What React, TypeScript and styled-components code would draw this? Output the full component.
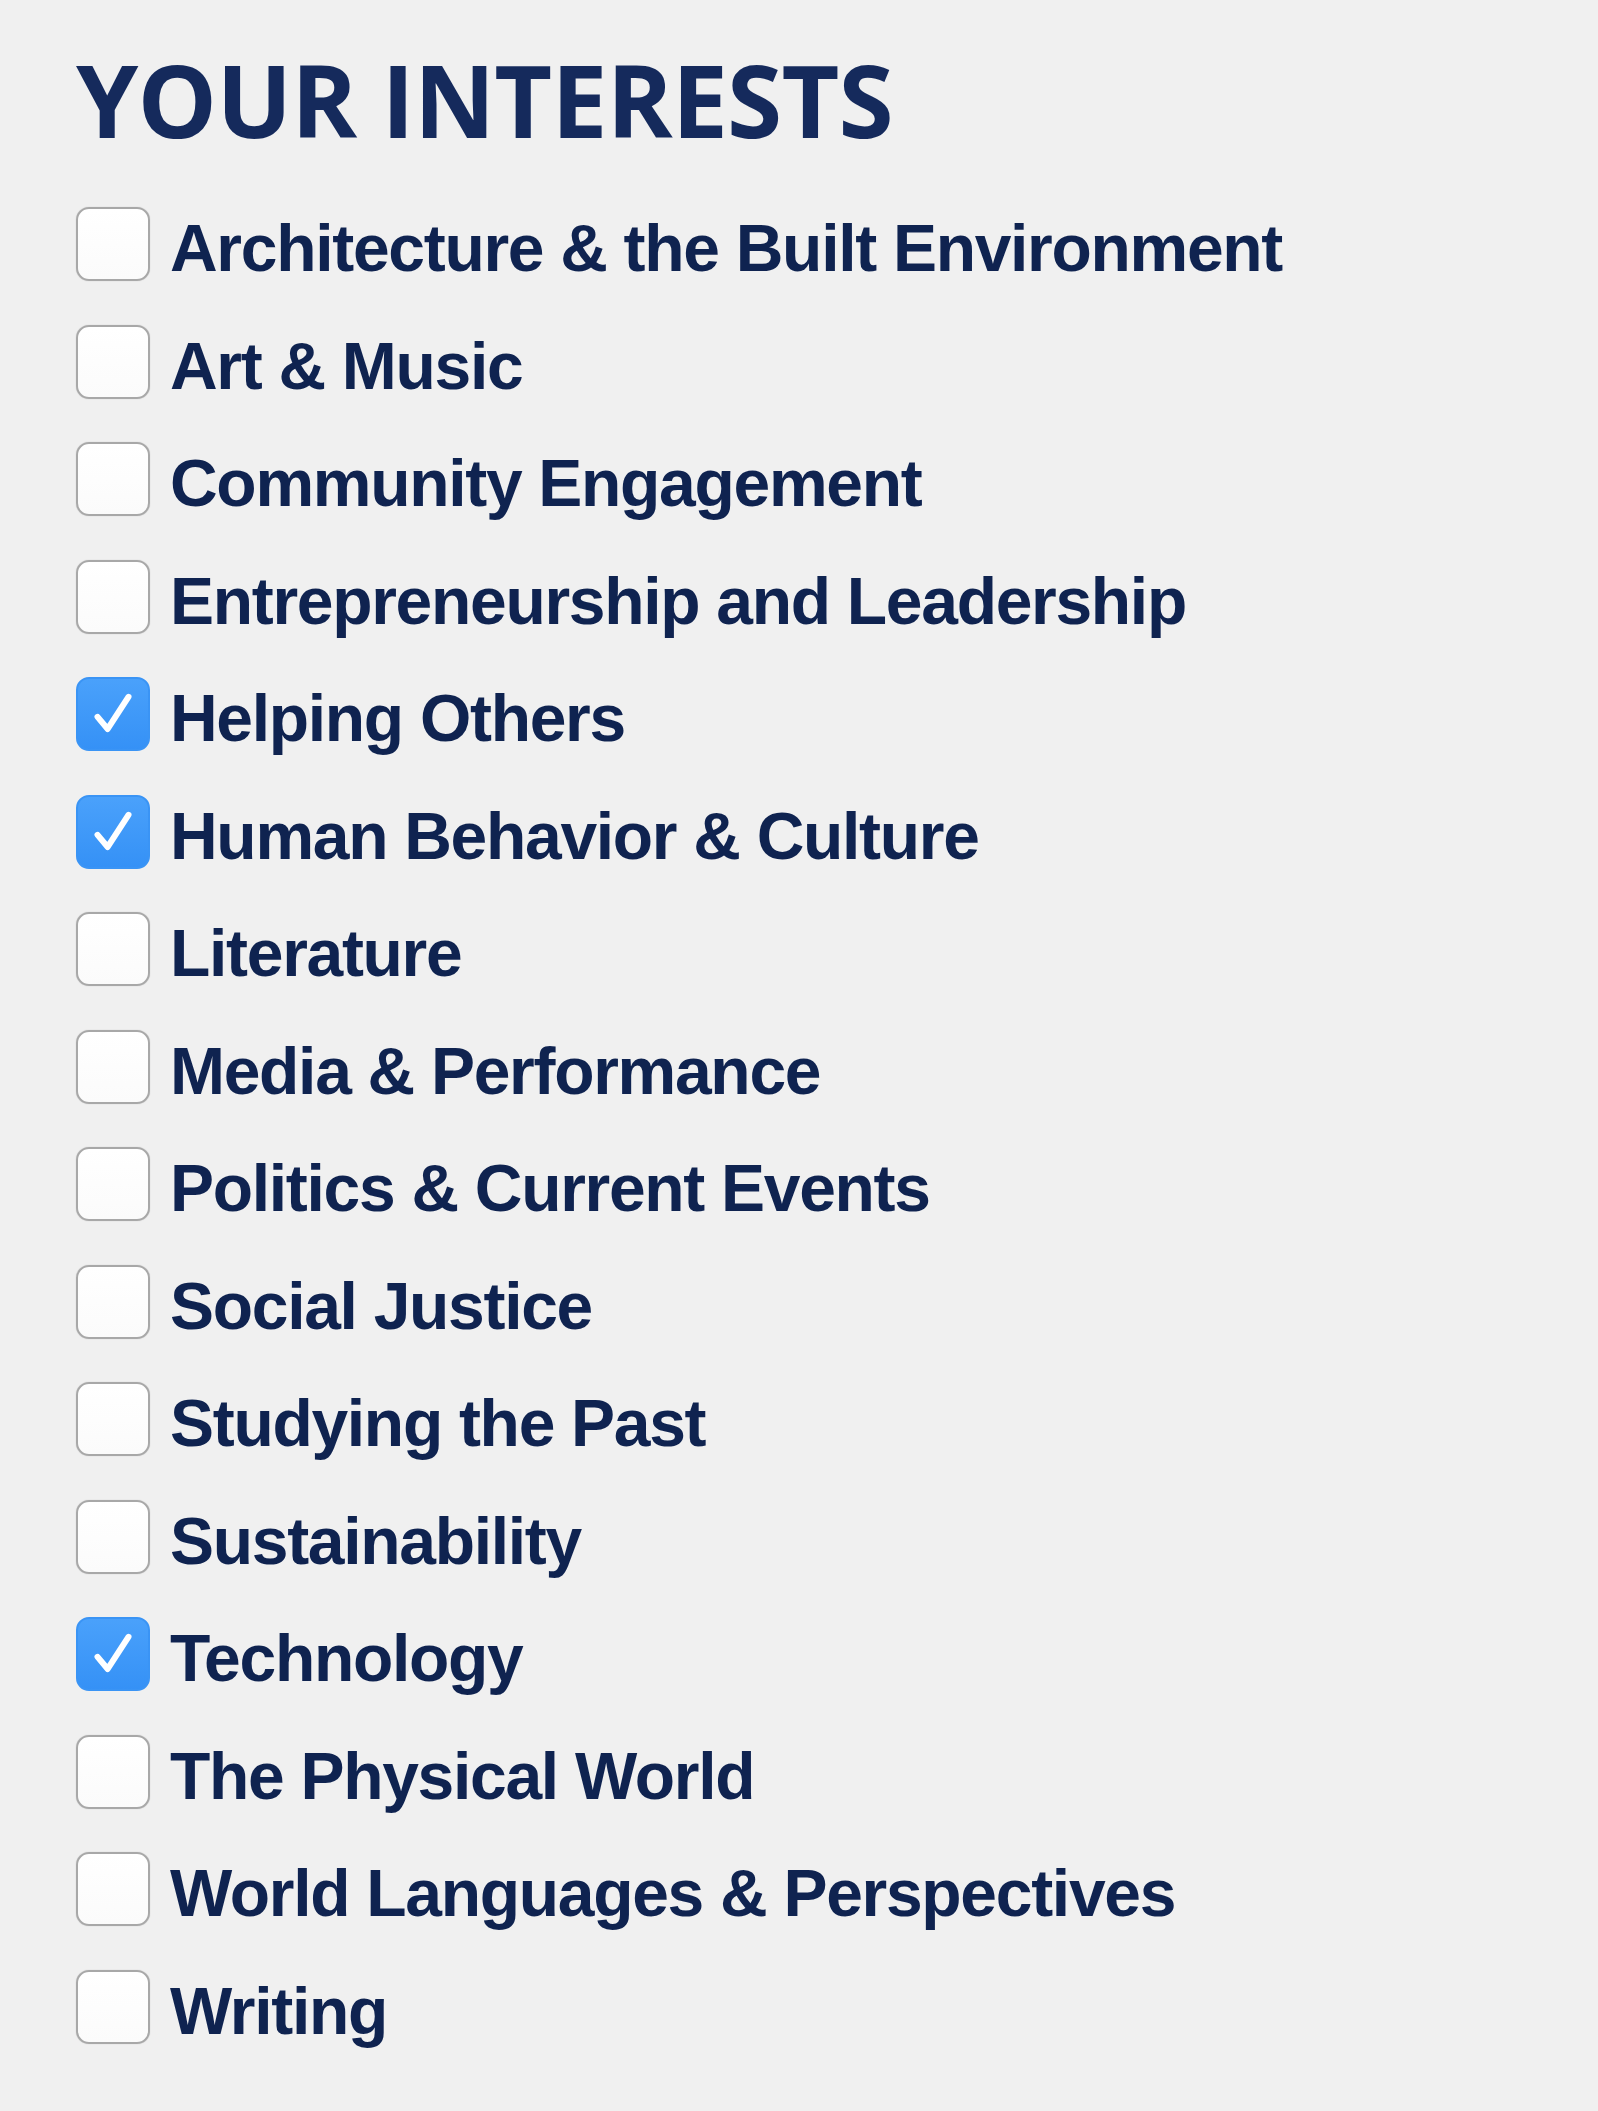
import styled, { createGlobalStyle } from 'styled-components'

const GlobalStyle = createGlobalStyle`
  html, body {
    margin: 0;
    padding: 0;
    background: #f0f0f0;
  }
`

const Page = styled.main`
  min-height: 2111px;
  box-sizing: border-box;
  padding: 49px 0 0 76px;
  background: #f0f0f0;
`

const Heading = styled.h1`
  margin: 0 0 58px;
  font-family: 'Open Sans', sans-serif;
  font-weight: 700;
  font-size: 100px;
  line-height: 1;
  letter-spacing: -0.8px;
  color: #152a5c;
`

const List = styled.ul`
  list-style: none;
  margin: 0;
  padding: 0;
  display: flex;
  flex-direction: column;
  gap: 43.5px;
`

const Row = styled.li`
  display: flex;
  align-items: center;
  gap: 20px;
  height: 74px;
`

const Box = styled.span<{ checked: boolean }>`
  flex: none;
  width: 74px;
  height: 74px;
  box-sizing: border-box;
  border-radius: 13px;
  display: flex;
  align-items: center;
  justify-content: center;
  border: ${({ checked }) => (checked ? '2px solid #3a94f5' : '2px solid #a8a8a8')};
  box-shadow: ${({ checked }) => (checked ? 'none' : '0 0 1px rgba(0, 0, 0, 0.25)')};
  background: ${({ checked }) =>
    checked ? 'linear-gradient(#4aa1fb, #3591f6)' : 'linear-gradient(#ffffff, #fbfbfb)'};
`

const Label = styled.span`
  padding-top: 8px;
  font-family: 'Liberation Sans', Arial, sans-serif;
  font-weight: 700;
  font-size: 66px;
  letter-spacing: -1.3px;
  line-height: 1;
  color: #0f2350;
`

const Check = () => (
  <svg width="58" height="58" viewBox="0 0 24 24" fill="none">
    <path
      d="M5.6 13.2 L9.8 18.2 L18.4 4.9"
      stroke="#fff"
      strokeWidth="2.5"
      strokeLinecap="round"
      strokeLinejoin="round"
    />
  </svg>
)

const interests = [
  { name: 'Architecture & the Built Environment', checked: false },
  { name: 'Art & Music', checked: false },
  { name: 'Community Engagement', checked: false },
  { name: 'Entrepreneurship and Leadership', checked: false },
  { name: 'Helping Others', checked: true },
  { name: 'Human Behavior & Culture', checked: true },
  { name: 'Literature', checked: false },
  { name: 'Media & Performance', checked: false },
  { name: 'Politics & Current Events', checked: false },
  { name: 'Social Justice', checked: false },
  { name: 'Studying the Past', checked: false },
  { name: 'Sustainability', checked: false },
  { name: 'Technology', checked: true },
  { name: 'The Physical World', checked: false },
  { name: 'World Languages & Perspectives', checked: false },
  { name: 'Writing', checked: false },
]

function App() {
  return (
    <Page>
      <GlobalStyle />
      <Heading>YOUR INTERESTS</Heading>
      <List>
        {interests.map((item) => (
          <Row key={item.name}>
            <Box checked={item.checked}>{item.checked && <Check />}</Box>
            <Label>{item.name}</Label>
          </Row>
        ))}
      </List>
    </Page>
  )
}

export default App
